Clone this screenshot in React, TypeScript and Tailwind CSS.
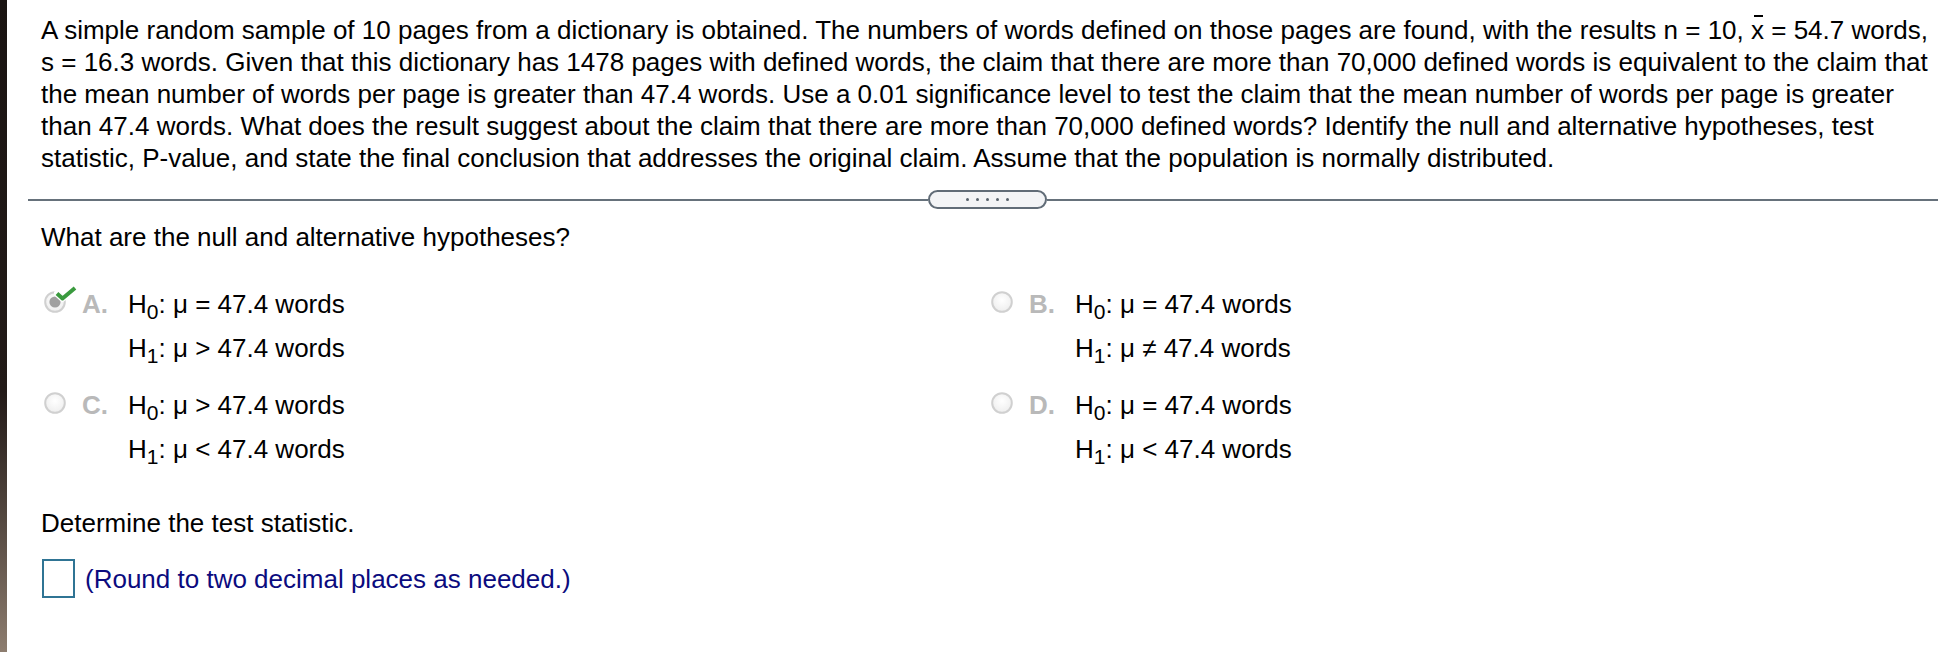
import React from "react";

function XBar() {
  return (
    <span className="relative inline-block">
      x
      <span className="absolute left-[3px] top-[1px] h-[2px] w-[9px] bg-black" />
    </span>
  );
}

const paragraph: React.ReactNode[] = [
  <>
    A simple random sample of 10 pages from a dictionary is obtained. The numbers of words defined on those pages are found, with the results n = 10, <XBar /> = 54.7 words,
  </>,
  <>s = 16.3 words. Given that this dictionary has 1478 pages with defined words, the claim that there are more than 70,000 defined words is equivalent to the claim that</>,
  <>the mean number of words per page is greater than 47.4 words. Use a 0.01 significance level to test the claim that the mean number of words per page is greater</>,
  <>than 47.4 words. What does the result suggest about the claim that there are more than 70,000 defined words? Identify the null and alternative hypotheses, test</>,
  <>statistic, P-value, and state the final conclusion that addresses the original claim. Assume that the population is normally distributed.</>,
];

function Hyp({ sub, sign }: { sub: string; sign: string }) {
  return (
    <div className="whitespace-nowrap leading-[42px]">
      H<span className="relative top-[6px] text-[21px]">{sub}</span>: μ {sign} 47.4 words
    </div>
  );
}

function Radio({ checked }: { checked?: boolean }) {
  return (
    <span className="relative mt-[8px] block h-[22px] w-[22px] shrink-0">
      <svg viewBox="0 0 22 22" className="h-[22px] w-[22px]">
        <defs>
          <radialGradient id="rg" cx="50%" cy="40%" r="60%">
            <stop offset="0%" stopColor="#ffffff" />
            <stop offset="100%" stopColor="#eeeeee" />
          </radialGradient>
        </defs>
        <circle cx="11" cy="11" r="9.8" fill="url(#rg)" stroke="#d0d0d0" strokeWidth="2" />
        {checked && <circle cx="11" cy="11" r="5.6" fill="#a0a0a0" />}
      </svg>
      {checked && (
        <svg viewBox="0 0 24 17" className="absolute left-[10px] top-[-6px] h-[17px] w-[24px]">
          <path d="M3 8.5 L8.5 13.5 L21 3" fill="none" stroke="#ffffff" strokeWidth="6.5" strokeLinecap="round" strokeLinejoin="round" />
          <path d="M3 8.5 L8.5 13.5 L21 3" fill="none" stroke="#3a9a3e" strokeWidth="4" strokeLinejoin="round" />
        </svg>
      )}
    </span>
  );
}

function Option({ letter, checked, h0, h1 }: { letter: string; checked?: boolean; h0: string; h1: string }) {
  return (
    <div className="flex items-start pl-[3px]">
      <Radio checked={checked} />
      <span className="ml-[16px] w-[46px] shrink-0 font-bold leading-[42px] text-[#b9b9b9]">{letter}.</span>
      <div>
        <Hyp sub="0" sign={h0} />
        <Hyp sub="1" sign={h1} />
      </div>
    </div>
  );
}

export default function App() {
  return (
    <div className="flex h-[652px] w-full overflow-hidden bg-white font-['Liberation_Sans',Arial,Helvetica,sans-serif] text-[26px] text-black">
      <div className="w-[7px] shrink-0 bg-linear-to-b from-[#1a1412] via-[#231b18] via-60% to-[#8d7d6f]" />
      <div className="flex min-w-0 flex-1 flex-col">
        <div className="pl-[34px] pt-[14px] leading-[32px]">
          {paragraph.map((line, i) => (
            <div key={i} className="whitespace-nowrap">
              {line}
            </div>
          ))}
        </div>

        <div className="ml-[21px] mt-[16px] flex h-[19px] items-center">
          <div className="h-[2px] w-[900px] bg-[#66717b]" />
          <div className="flex h-[19px] w-[119px] shrink-0 items-center justify-center gap-[6.5px] rounded-full border-2 border-[#616c77] bg-[#f3f4f6]">
            {[0, 1, 2, 3, 4].map((d) => (
              <span key={d} className="h-[3.5px] w-[3.5px] rounded-full bg-[#57626c]" />
            ))}
          </div>
          <div className="h-[2px] flex-1 bg-[#66717b]" />
        </div>

        <div className="mt-[12px] pl-[34px] leading-[32px]">What are the null and alternative hypotheses?</div>

        <div className="mt-[30px] grid grid-cols-[947px_1fr] gap-y-[13px] pl-[34px]">
          <Option letter="A" checked h0="=" h1=">" />
          <Option letter="B" h0="=" h1="≠" />
          <Option letter="C" h0=">" h1="<" />
          <Option letter="D" h0="=" h1="<" />
        </div>

        <div className="mt-[35px] pl-[34px] leading-[32px]">Determine the test statistic.</div>

        <div className="mt-[20px] flex items-center pl-[35px]">
          <div className="h-[39px] w-[33px] shrink-0 border-2 border-[#2f7494] bg-white" />
          <span className="ml-[10px] leading-[32px] text-[#0b0b7e]">(Round to two decimal places as needed.)</span>
        </div>
      </div>
    </div>
  );
}
